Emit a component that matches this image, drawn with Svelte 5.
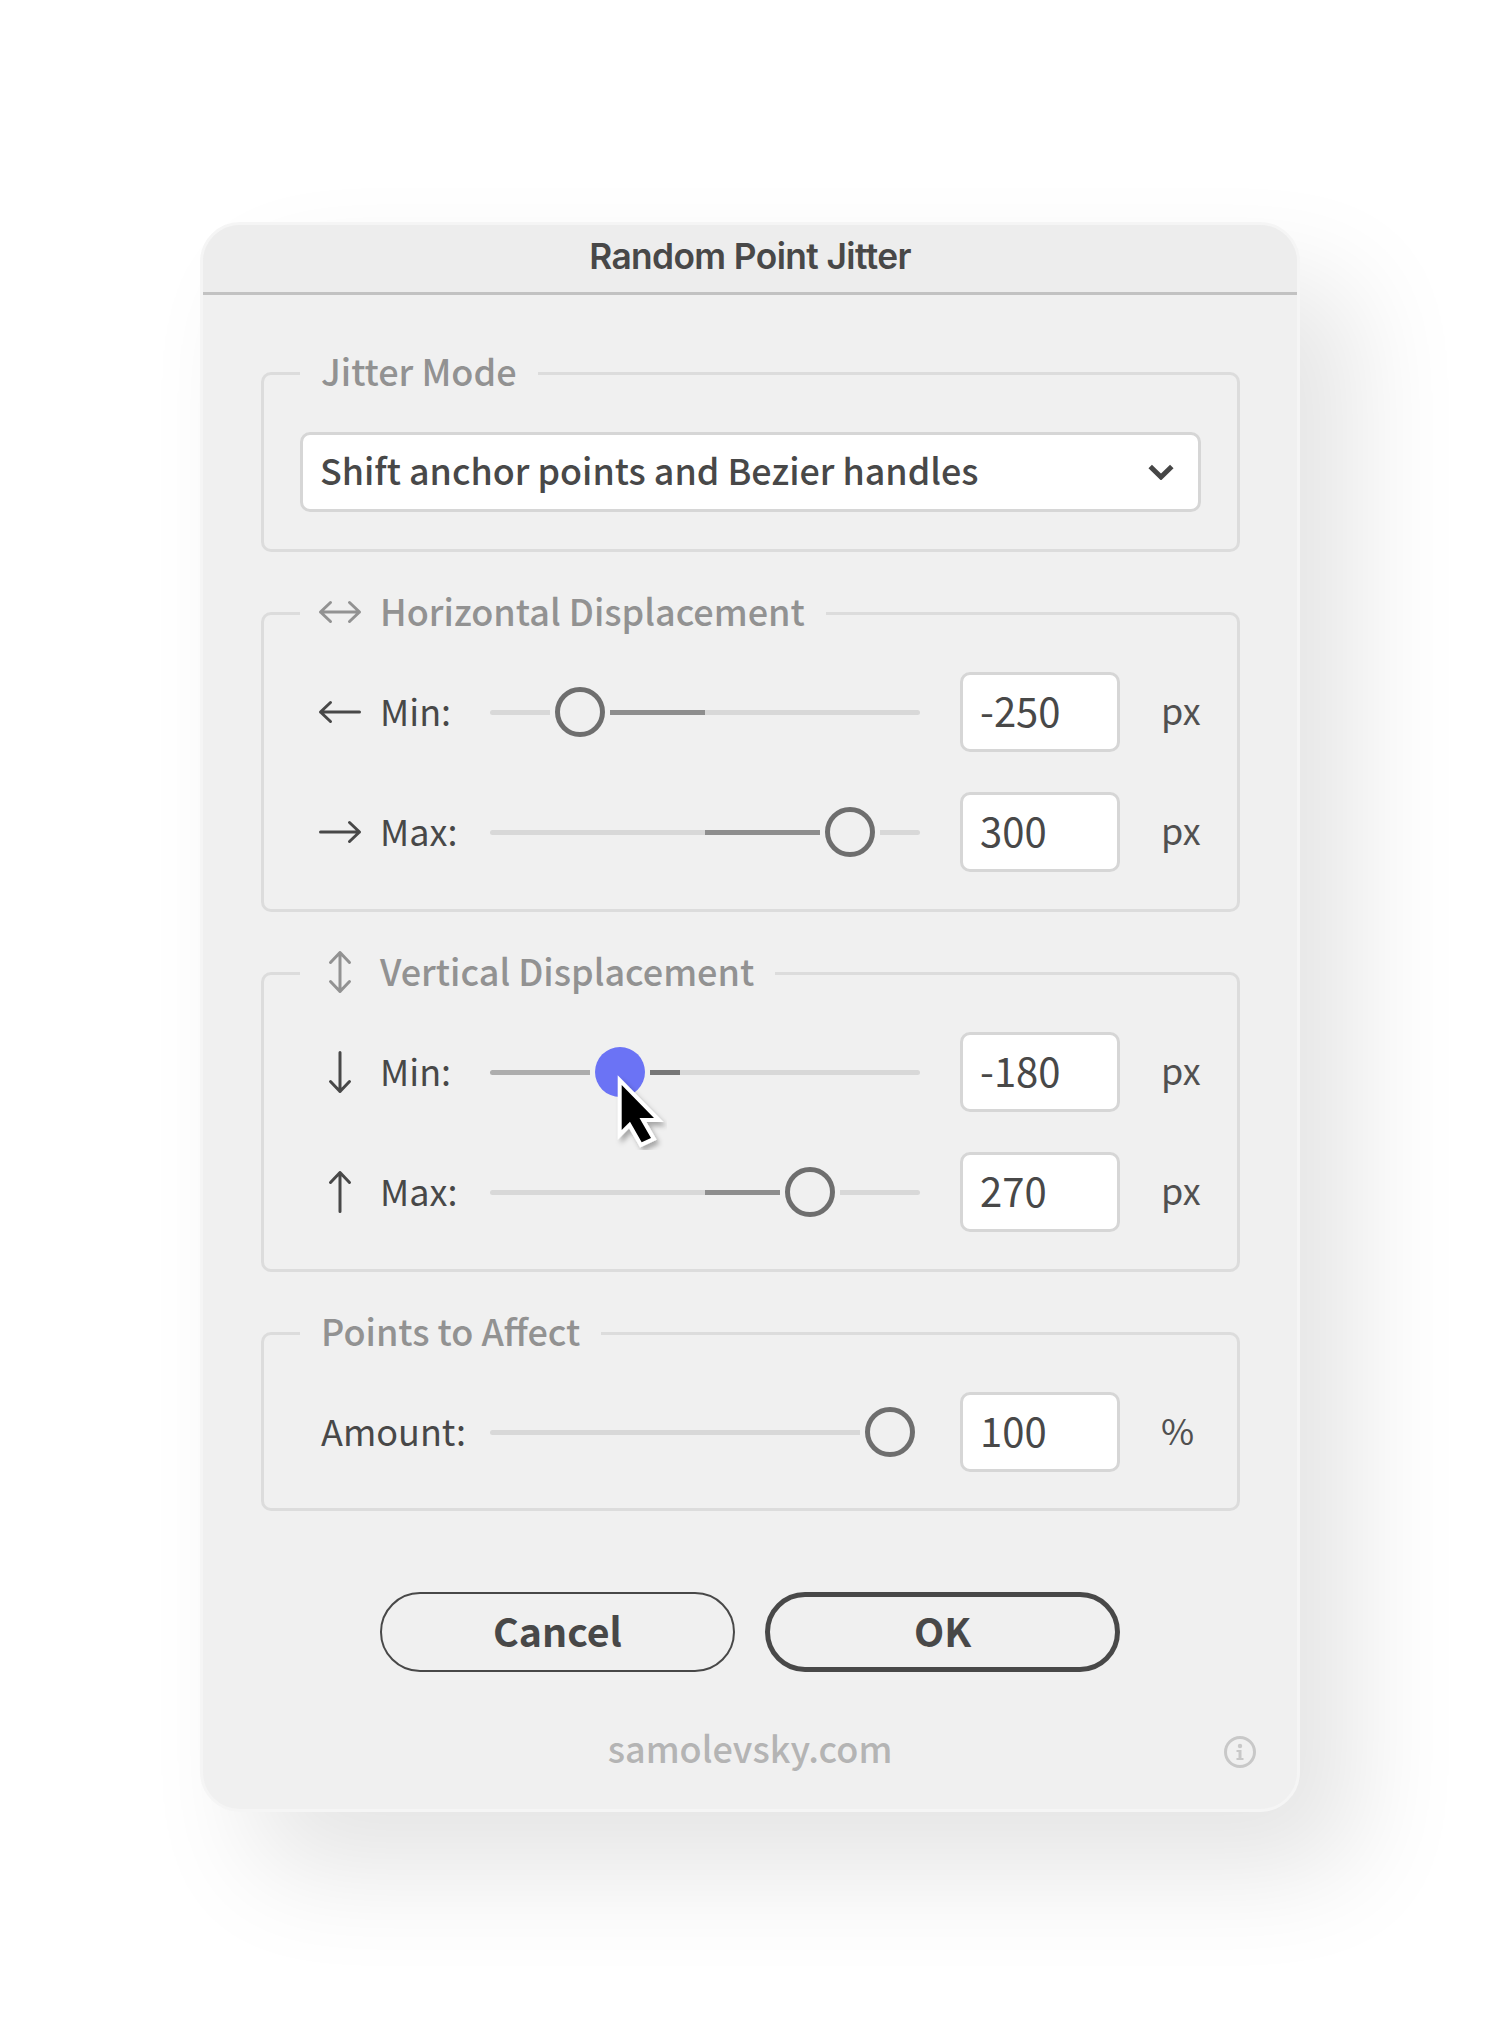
<script>
  const groups = [
    { title: 'Horizontal Displacement', icon: 'h', rows: [
      { icon: 'l', label: 'Min:', value: '-250', unit: 'px', thumb: 580, segs: [[490,550,'t'],[610,705,'a'],[705,920,'t']] },
      { icon: 'r', label: 'Max:', value: '300', unit: 'px', thumb: 850, segs: [[490,705,'t'],[705,820,'a'],[880,920,'t']] }
    ]},
    { title: 'Vertical Displacement', icon: 'v', rows: [
      { icon: 'd', label: 'Min:', value: '-180', unit: 'px', thumb: 620, active: true, segs: [[490,590,'m'],[650,680,'k'],[680,920,'t']] },
      { icon: 'u', label: 'Max:', value: '270', unit: 'px', thumb: 810, segs: [[490,705,'t'],[705,780,'a'],[840,920,'t']] }
    ]}
  ];
  const arrows = {
    h: 'M2.5 17H41.5M12.5 7.5L2.5 17L12.5 26.5M31.5 7.5L41.5 17L31.5 26.5',
    l: 'M2.5 17H41.5M12.5 7.5L2.5 17L12.5 26.5',
    r: 'M2.5 17H41.5M31.5 7.5L41.5 17L31.5 26.5',
    v: 'M22 -2.5V36.5M12.5 7.5L22 -2.5L31.5 7.5M12.5 26.5L22 36.5L31.5 26.5',
    d: 'M22 -2.5V36.5M12.5 26.5L22 36.5L31.5 26.5',
    u: 'M22 -2.5V36.5M12.5 7.5L22 -2.5L31.5 7.5'
  };
</script>

{#snippet arrow(k)}
  <svg class="arrow" width="44" height="34" viewBox="0 0 44 34" fill="none" stroke="currentColor" stroke-width="3" stroke-linecap="round" stroke-linejoin="round" overflow="visible"><path d={arrows[k]} /></svg>
{/snippet}

{#snippet slider(r)}
  <div class="slider">
    {#each r.segs as s}
      <span class="seg {s[2]}" class:rl={s[0] === 490} class:rr={s[1] === 920} style="left:{s[0]-490}px;width:{s[1]-s[0]}px"></span>
    {/each}
    <span class="thumb" class:on={r.active} style="left:{r.thumb-490}px"></span>
  </div>
{/snippet}

<div class="page">
  <div class="dialog">
    <header>Random Point Jitter</header>
    <div class="body">
      <section class="box first">
        <h2 class="legend"><span>Jitter Mode</span></h2>
        <div class="select">
          <span class="seltext">Shift anchor points and Bezier handles</span>
          <svg width="26" height="16" viewBox="0 0 26 16" fill="none" stroke="#464646" stroke-width="5"><path d="M2.2 2.5L13 13L23.8 2.5" /></svg>
        </div>
      </section>

      {#each groups as g}
        <section class="box double">
          <h2 class="legend icon">{@render arrow(g.icon)}<span>{g.title}</span></h2>
          {#each g.rows as r}
            <div class="row">
              <div class="lab">{@render arrow(r.icon)}<span class="tx">{r.label}</span></div>
              {@render slider(r)}
              <div class="input">{r.value}</div>
              <span class="unit">{r.unit}</span>
            </div>
          {/each}
        </section>
      {/each}

      <section class="box single">
        <h2 class="legend"><span>Points to Affect</span></h2>
        <div class="row">
          <div class="lab plain"><span class="tx">Amount:</span></div>
          {@render slider({ thumb: 890, segs: [[490,860,'t']] })}
          <div class="input">100</div>
          <span class="unit">%</span>
        </div>
      </section>

      <div class="buttons">
        <button class="btn">Cancel</button>
        <button class="btn ok">OK</button>
      </div>
      <footer>
        <span class="site">samolevsky.com</span>
        <svg class="info" width="32" height="32" viewBox="0 0 32 32"><circle cx="16" cy="16" r="14.5" fill="none" stroke="#c8c8c8" stroke-width="3"/><circle cx="16" cy="10" r="2.2" fill="#c8c8c8"/><path d="M12.5 14H17.5V22H19.5V24H12.5V22H14.5V16H12.5Z" fill="#c8c8c8"/></svg>
      </footer>
    </div>
  </div>
  <svg class="cursor" width="60" height="80" viewBox="0 0 60 80">
    <defs><filter id="sh" x="-30%" y="-30%" width="170%" height="170%"><feDropShadow dx="3" dy="4" stdDeviation="2.5" flood-color="#000" flood-opacity=".3"/></filter></defs>
    <path d="M11.7 15L44 48H29.5L41 68L31.7 72.3L20 51.7L11.7 60Z" fill="#000" stroke="#fff" stroke-width="8" stroke-linejoin="miter" paint-order="stroke" filter="url(#sh)"/>
  </svg>
</div>

<style>
  :global(body) { margin: 0; background: #fff; }
  .page { position: relative; width: 1500px; height: 2030px; box-sizing: border-box; padding: 222px 200px 0; font-family: "Noto Sans CJK SC", "Noto Sans", sans-serif; color: #484848; overflow: hidden; }
  .dialog { width: 1100px; height: 1590px; box-sizing: border-box; background: #f0f0f0; border: 3px solid #f5f5f5; border-radius: 40px; box-shadow: 55px 60px 110px rgba(0,0,0,.105); overflow: hidden; }
  header { height: 70px; box-sizing: border-box; background: #ededed; border-bottom: 3px solid #c2c2c2; text-align: center; font: 600 35.3px/64px Inter, sans-serif; letter-spacing: -0.6px; color: #484848; }
  .body { padding: 77px 58px 0; }
  .box { position: relative; box-sizing: border-box; width: 979px; border: 3px solid #dcdcdc; border-radius: 10px; margin-bottom: 60px; }
  .first { height: 180px; padding: 57px 36px 0; }
  .double { height: 300px; padding: 57px 0 0 0; }
  .single { height: 179px; padding: 57px 0 0 0; margin-bottom: 81px; }
  .legend { position: absolute; left: 36px; top: -37px; margin: 0; padding: 0 21px; background: #f0f0f0; font-size: 36px; line-height: 64px; font-weight: 500; color: #929292; display: flex; align-items: center; gap: 18px; white-space: nowrap; }
  .legend.icon { padding: 0 21px 0 18px; }
  .legend .arrow { margin-top: 4px; }
  .arrow { flex: none; display: block; }
  .select { height: 80px; box-sizing: border-box; background: #fff; border: 3px solid #d6d6d6; border-radius: 10px; display: flex; align-items: center; justify-content: space-between; padding: 0 24px 0 17px; font-size: 35.85px; font-weight: 500; color: #484848; }
  .seltext { margin-top: -6px; }
  .row { display: flex; align-items: center; height: 80px; margin-bottom: 40px; padding-left: 54px; }
  .lab { width: 172px; flex: none; display: flex; align-items: center; gap: 18px; font-size: 36px; color: #484848; }
  .tx { margin-top: -4px; }
  .lab.plain { gap: 0; padding-left: 3px; width: 169px; }
  .slider { position: relative; width: 430px; height: 5px; flex: none; }
  .seg { position: absolute; top: 0; height: 5px; }
  .rl { border-radius: 2.5px 0 0 2.5px; }
  .rr { border-radius: 0 2.5px 2.5px 0; }
  .t { background: #d8d8d8; }
  .a { background: #8e8e8e; }
  .m { background: #adadad; }
  .k { background: #777; }
  .thumb { position: absolute; top: 2.5px; width: 50px; height: 50px; box-sizing: border-box; border: 5px solid #6e6e6e; border-radius: 50%; transform: translate(-50%, -50%); }
  .thumb.on { background: #6b73f5; border: 0; }
  .input { margin-left: 40px; width: 160px; height: 80px; box-sizing: border-box; background: #fff; border: 3px solid #d6d6d6; border-radius: 10px; padding-left: 17px; font-size: 40px; line-height: 70px; flex: none; }
  .unit { margin-left: 41px; margin-top: -6px; font-size: 36px; color: #505050; }
  .buttons { display: flex; justify-content: center; gap: 30px; }
  .btn { box-sizing: border-box; width: 355px; height: 80px; border: 2px solid #484848; background: transparent; border-radius: 40px; font: 600 39.3px/1 "Noto Sans CJK SC", sans-serif; color: #484848; padding: 0 0 5px; }
  .btn.ok { border-width: 5px; }
  footer { position: relative; margin-top: 45px; text-align: center; font-size: 36px; font-weight: 500; line-height: 60px; color: #b4b4b4; }
  .info { position: absolute; right: -17px; top: 19px; }
  .cursor { position: absolute; left: 610px; top: 1070px; }
</style>
